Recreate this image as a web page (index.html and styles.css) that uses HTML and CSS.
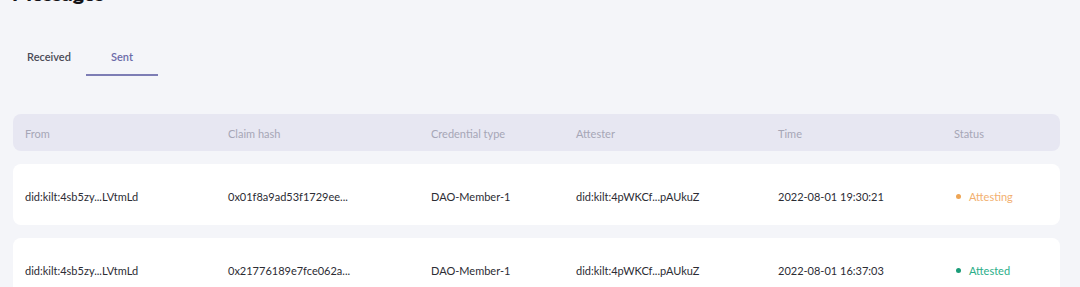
FILE: index.html
```html
<!DOCTYPE html>
<html lang="en">
<head>
    <meta charset="UTF-8">
    <title>Messages</title>
    <link rel="stylesheet" href="styles.css">
</head>
<body>
    <div class="page">
        <h1 class="title">Messages</h1>

        <div class="tabs">
            <button class="tab">Received</button>
            <button class="tab active">Sent</button>
        </div>

        <div class="table">
            <div class="row head">
                <div>From</div>
                <div>Claim hash</div>
                <div>Credential type</div>
                <div>Attester</div>
                <div>Time</div>
                <div>Status</div>
            </div>
            <div class="row">
                <div>did:kilt:4sb5zy...LVtmLd</div>
                <div>0x01f8a9ad53f1729ee...</div>
                <div>DAO-Member-1</div>
                <div>did:kilt:4pWKCf...pAUkuZ</div>
                <div>2022-08-01 19:30:21</div>
                <div class="status attesting"><span class="dot"></span>Attesting</div>
            </div>
            <div class="row">
                <div>did:kilt:4sb5zy...LVtmLd</div>
                <div>0x21776189e7fce062a...</div>
                <div>DAO-Member-1</div>
                <div>did:kilt:4pWKCf...pAUkuZ</div>
                <div>2022-08-01 16:37:03</div>
                <div class="status attested"><span class="dot"></span>Attested</div>
            </div>
        </div>
    </div>
</body>
</html>
```

FILE: styles.css
```css
body {
    margin: 0;
    background: #f4f5f9;
    font-family: 'Lato', 'Inter', sans-serif;
    color: #2c2c34;
    overflow: hidden;
}

.page {
    padding: 0 20px 0 13px;
}

.title {
    margin: -19px 0 0 -1px;
    font-size: 21px;
    line-height: 24px;
    font-weight: 800;
    color: #141419;
}

.tabs {
    display: flex;
    gap: 1px;
    margin-top: 45px;
}

.tab {
    min-width: 72px;
    padding: 0 0 10px;
    background: none;
    border: none;
    border-bottom: 2px solid transparent;
    font-family: inherit;
    font-size: 11px;
    font-weight: 600;
    color: #4a4a55;
    line-height: 14px;
    cursor: pointer;
}

.tab.active {
    color: #6b6ba8;
    border-bottom-color: #7d7db5;
}

.table {
    margin-top: 38px;
    display: flex;
    flex-direction: column;
    gap: 13px;
}

.row {
    display: grid;
    grid-template-columns: 203px 203px 145px 202px 176px 1fr;
    align-items: center;
    padding: 3px 12px 0;
    height: 61px;
    box-sizing: border-box;
    background: #fff;
    border-radius: 8px;
    font-size: 11px;
}

.row.head {
    height: 37px;
    padding-top: 1px;
    background: #e7e7f2;
    color: #a6a6b6;
}

.status {
    display: flex;
    align-items: center;
    gap: 8px;
    padding-left: 2px;
}

.dot {
    width: 5px;
    height: 5px;
    border-radius: 50%;
}

.attesting {
    color: #f2b070;
}

.attesting .dot {
    background: #eea555;
}

.attested {
    color: #2aae88;
}

.attested .dot {
    background: #1a9c78;
}
```
